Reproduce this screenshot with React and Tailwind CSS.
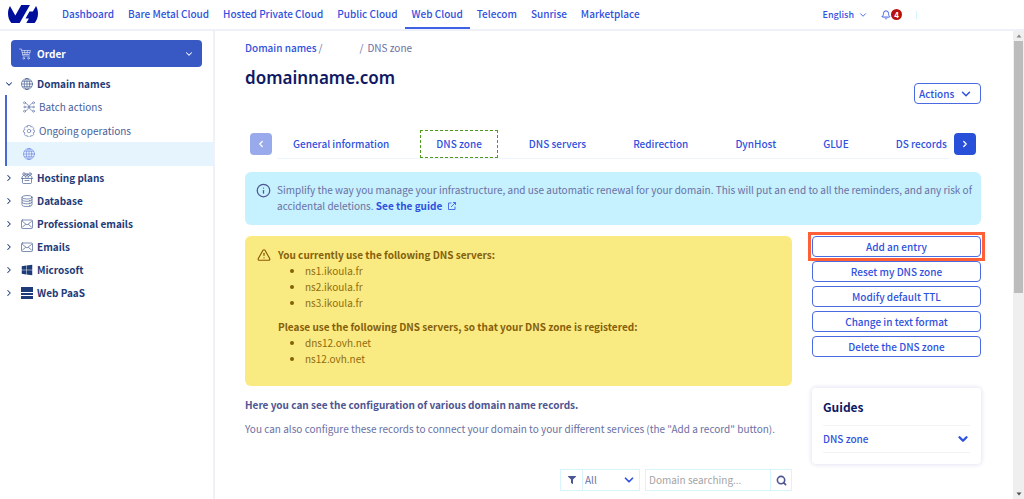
import { useState } from 'react'
import { SiOvh } from 'react-icons/si'
import { FaWindows, FaFilter } from 'react-icons/fa'
import { ChevronDown, ChevronLeft, ChevronRight, Bell, Search, Info, TriangleAlert } from 'lucide-react'

const universes = [
  'Dashboard',
  'Bare Metal Cloud',
  'Hosted Private Cloud',
  'Public Cloud',
  'Web Cloud',
  'Telecom',
  'Sunrise',
  'Marketplace',
]

const tabs = [
  'General information',
  'DNS zone',
  'DNS servers',
  'Redirection',
  'DynHost',
  'GLUE',
  'DS records',
]

const zoneActions = [
  'Add an entry',
  'Reset my DNS zone',
  'Modify default TTL',
  'Change in text format',
  'Delete the DNS zone',
]

function LineIcon({ children }) {
  return (
    <svg
      className="h-3 w-3 shrink-0 opacity-80"
      viewBox="0 0 24 24"
      fill="none"
      stroke="currentColor"
      strokeWidth="1.4"
      strokeLinecap="round"
      strokeLinejoin="round"
      aria-hidden="true"
    >
      {children}
    </svg>
  )
}

function GlobeIcon() {
  return (
    <LineIcon>
      <circle cx="12" cy="12" r="11" />
      <ellipse cx="12" cy="12" rx="5.5" ry="11" />
      <path d="M12 1v22M1 12h22M3 6.5h18M3 17.5h18" />
    </LineIcon>
  )
}

function BatchIcon() {
  return (
    <LineIcon>
      <path d="M5 4.5l4 2 3 5.5 3-5.5 4-2M5 19.5l4-2 3-5.5 3 5.5 4 2M5 12h3M16 12h3" />
      <circle cx="3" cy="3.5" r="2" />
      <circle cx="21" cy="3.5" r="2" />
      <circle cx="3" cy="20.5" r="2" />
      <circle cx="21" cy="20.5" r="2" />
      <circle cx="3" cy="12" r="1.5" />
      <circle cx="21" cy="12" r="1.5" />
      <circle cx="12" cy="12" r="2" />
    </LineIcon>
  )
}

function GearIcon() {
  return (
    <LineIcon>
      <path d="M9.5 1h5l1 3 3-1 3 3.5-1.5 3 3 1.2v3.6l-3 1.2 1.5 3-3 3.5-3-1-1 3h-5l-1-3-3 1-3-3.5 1.5-3-3-1.2v-3.6l3-1.2-1.5-3L5.5 3l3 1z" />
      <circle cx="12" cy="12" r="3.5" />
    </LineIcon>
  )
}

function HostingIcon() {
  return (
    <LineIcon>
      <path d="M1 13h22M3 13v8q0 2 2 2h14q2 0 2-2v-8M8 17h8" />
      <path d="M2 12c0-4 2-5 4-5s3 2 4 5M14 12c0-3 2-5 4-5s4 1 4 5M8 9c1-2 7-2 8 0" />
      <circle cx="6" cy="4" r="2.5" />
      <circle cx="18" cy="4" r="2.5" />
      <circle cx="12" cy="5" r="2" />
    </LineIcon>
  )
}

function DatabaseIcon() {
  return (
    <LineIcon>
      <ellipse cx="12" cy="4.5" rx="10" ry="3.5" />
      <path d="M2 4.5v15c0 5 20 5 20 0v-15M2 9.5c0 4.5 20 4.5 20 0M2 14.5c0 4.5 20 4.5 20 0M17 11h1M17 16h1M17 21h1" />
    </LineIcon>
  )
}

function MailIcon() {
  return (
    <LineIcon>
      <rect x="1" y="4" width="22" height="17" rx="2" />
      <path d="M3 7l9 7 9-7M3 18l6-5M21 18l-6-5" />
    </LineIcon>
  )
}

function PaasIcon() {
  return (
    <svg className="h-3 w-3 shrink-0" viewBox="0 0 12 12" fill="currentColor" aria-hidden="true">
      <path d="M0 0h12v5H0zM0 6h12v2H0zM0 9h12v3H0z" />
    </svg>
  )
}

function CartIcon() {
  return (
    <LineIcon>
      <path d="M1 2h4l3 14h13M5.5 5H23l-2.5 8H7.5M6.5 9h15M11 5l1 8M17 5l-1 8" />
      <circle cx="9.5" cy="20.5" r="1.8" />
      <circle cx="19" cy="20.5" r="1.8" />
    </LineIcon>
  )
}

function ExternalIcon() {
  return (
    <svg
      className="ml-[6px] inline h-2 w-2 align-baseline"
      viewBox="0 0 16 16"
      fill="none"
      stroke="currentColor"
      strokeWidth="1.6"
      aria-hidden="true"
    >
      <path d="M7 2H1v13h13V9M10 1h5v5M15 1L6 10" />
    </svg>
  )
}

const services = [
  { label: 'Hosting plans', icon: <HostingIcon /> },
  { label: 'Database', icon: <DatabaseIcon /> },
  { label: 'Professional emails', icon: <MailIcon /> },
  { label: 'Emails', icon: <MailIcon /> },
  { label: 'Microsoft', icon: <FaWindows className="h-3 w-3 shrink-0" /> },
  { label: 'Web PaaS', icon: <PaasIcon /> },
]

function Header() {
  return (
    <header className="flex h-[31px] shrink-0 items-stretch border-b-2 border-[#f0f1f8] text-[#2f51dd]">
      <a href="#home" aria-label="OVH" className="flex items-center pb-[2px] pl-2 text-[#000e9c]">
        <SiOvh className="h-[30px] w-[30px]" />
      </a>
      <nav className="ml-[17px] flex">
        {universes.map((name) => (
          <a
            key={name}
            href="#universe"
            className={`flex items-center border-b-2 px-[7px] font-medium whitespace-nowrap ${
              name === 'Web Cloud' ? 'border-[#3f62e4]' : 'border-transparent'
            }`}
          >
            {name}
          </a>
        ))}
      </nav>
      <div className="mr-[107px] ml-auto flex items-center">
        <button className="flex items-center gap-1 text-[9px] font-medium">
          English
          <ChevronDown className="h-[10px] w-[10px]" strokeWidth={2} />
        </button>
        <button className="ml-[13px] flex items-center" aria-label="Notifications">
          <Bell className="h-[10px] w-[10px]" strokeWidth={2.2} />
          <span className="flex h-[11px] w-[11px] items-center justify-center rounded-full bg-[#b81010] text-[8px] leading-none font-bold text-white">
            4
          </span>
        </button>
        <span className="ml-[14px] h-2 border-l border-[#d5f5fb]" />
      </div>
    </header>
  )
}

function Sidebar() {
  return (
    <aside className="w-[215px] shrink-0 border-r-2 border-[#f0f1f8] text-[#1c3b78]">
      <div className="px-[11px] pt-[9px] pb-[5px]">
        <button className="flex h-[27px] w-full items-center rounded bg-[#3859c4] px-2 font-bold text-white">
          <CartIcon />
          <span className="ml-[6px]">Order</span>
          <ChevronDown className="ml-auto h-[10px] w-[10px]" strokeWidth={2.5} />
        </button>
      </div>
      <ul>
        <li>
          <a href="#domains" className="flex h-[23px] items-center pl-1 font-bold">
            <ChevronDown className="mr-[7px] h-[10px] w-[10px]" strokeWidth={2.5} />
            <GlobeIcon />
            <span className="ml-1">Domain names</span>
          </a>
          <ul className="ml-[5px] border-l-2 border-[#4a68d4] text-[#47609a]">
            <li>
              <a href="#batch" className="flex h-6 items-center gap-1 pl-4">
                <BatchIcon />
                Batch actions
              </a>
            </li>
            <li>
              <a href="#operations" className="flex h-[23px] items-center gap-1 pl-4">
                <GearIcon />
                Ongoing operations
              </a>
            </li>
            <li>
              <a href="#domain" aria-label="Domain" className="flex h-6 items-center bg-[#e6f4fd] pl-4 text-[#5b77df]">
                <GlobeIcon />
              </a>
            </li>
          </ul>
        </li>
        {services.map(({ label, icon }) => (
          <li key={label}>
            <a href="#service" className="flex h-[23px] items-center pl-1 font-bold">
              <ChevronRight className="mr-[7px] h-[10px] w-[10px]" strokeWidth={2.5} />
              {icon}
              <span className="ml-1">{label}</span>
            </a>
          </li>
        ))}
      </ul>
    </aside>
  )
}

function Tabs({ current, onSelect }) {
  return (
    <div className="mt-[26px] flex items-start gap-[5px] px-[5px] text-[#2f51dd]">
      <button
        aria-label="Previous tabs"
        disabled
        className="mt-[3px] flex h-[22px] w-[22px] shrink-0 items-center justify-center rounded bg-[#98a9ec] text-white"
      >
        <ChevronLeft className="h-[10px] w-[10px]" strokeWidth={3} />
      </button>
      <div className="flex min-w-0 flex-1 gap-[15px] overflow-hidden border-b border-[#eef6fd]" role="tablist">
        {tabs.map((tab) => (
          <button
            key={tab}
            role="tab"
            aria-selected={tab === current}
            onClick={() => onSelect(tab)}
            className={`h-7 shrink-0 border px-[15px] font-medium whitespace-nowrap ${
              tab === current ? 'border-dashed border-[#4f9a1c]' : 'border-transparent'
            }`}
          >
            {tab}
          </button>
        ))}
      </div>
      <button
        aria-label="Next tabs"
        className="mt-[3px] flex h-[22px] w-[22px] shrink-0 items-center justify-center rounded bg-[#2850d9] text-white"
      >
        <ChevronRight className="h-[10px] w-[10px]" strokeWidth={3} />
      </button>
    </div>
  )
}

function ServersNotice() {
  return (
    <div className="flex min-h-[150px] rounded-md bg-[#faea82] px-3 pt-[11px] text-[#8f6c0c]">
      <TriangleAlert className="mt-px mr-[7px] h-[14px] w-[14px] shrink-0 text-[#8a5a00]" strokeWidth={2} />
      <div>
        <p className="font-bold text-[#85600a]">You currently use the following DNS servers:</p>
        <ul className="list-disc pl-[27px] marker:text-[#85600a]">
          <li>ns1.ikoula.fr</li>
          <li>ns2.ikoula.fr</li>
          <li>ns3.ikoula.fr</li>
        </ul>
        <p className="mt-2 font-bold text-[#85600a]">
          Please use the following DNS servers, so that your DNS zone is registered:
        </p>
        <ul className="list-disc pl-[27px] marker:text-[#85600a]">
          <li>dns12.ovh.net</li>
          <li>ns12.ovh.net</li>
        </ul>
      </div>
    </div>
  )
}

function Filters() {
  return (
    <div className="mt-8 flex justify-end gap-[5px]">
      <div className="flex h-[22px] w-20 border border-[#d8f5fd]">
        <label htmlFor="record-type" aria-label="Record type" className="flex w-[21px] items-center justify-center text-[#4d5592]">
          <FaFilter className="h-2 w-2" />
        </label>
        <div className="relative flex-1 border-l border-[#d8f5fd]">
          <select id="record-type" className="h-full w-full appearance-none pl-[2px] outline-none">
            <option>All</option>
          </select>
          <ChevronDown className="pointer-events-none absolute top-[3px] right-[3px] h-[14px] w-[14px] text-[#2f51dd]" strokeWidth={3} />
        </div>
      </div>
      <div className="flex h-[22px] w-[147px] border border-[#d8f5fd]">
        <input
          type="text"
          aria-label="Domain searching"
          placeholder="Domain searching..."
          className="min-w-0 flex-1 pl-[3px] outline-none placeholder:text-[#a3a3a3]"
        />
        <button aria-label="Search" className="flex w-[21px] items-center justify-center border-l border-[#d8f5fd] text-[#4d5592]">
          <Search className="h-[11px] w-[11px]" strokeWidth={3.5} />
        </button>
      </div>
    </div>
  )
}

function ZonePanel() {
  return (
    <div className="w-[169px] shrink-0">
      <ul className="flex flex-col gap-1">
        {zoneActions.map((action, idx) => (
          <li key={action} className={idx === 0 ? 'outline-3 outline-offset-1 outline-[#ff6038]' : ''}>
            <button className="flex h-[21px] w-full items-center justify-center rounded border border-[#4a6ae2] font-medium text-[#2f51dd]">
              {action}
            </button>
          </li>
        ))}
      </ul>
      <div className="mt-[31px] rounded px-[11px] pt-[9px] pb-[11px] shadow-[0_0_4px_1px_#e4e4f2]">
        <h2 className="text-xs leading-5 font-bold text-[#0f1863]">Guides</h2>
        <button className="mt-2 flex h-7 w-full items-center justify-between border-y border-[#f2f2f5] font-medium text-[#2f51dd]">
          DNS zone
          <ChevronDown className="h-[14px] w-[14px]" strokeWidth={4} />
        </button>
      </div>
    </div>
  )
}

// Static scroll track on the right edge of the content
function ScrollTrack() {
  return (
    <div className="flex w-[11px] shrink-0 flex-col items-center bg-[#efefef]" aria-hidden="true">
      <svg className="h-[10px] w-[10px] shrink-0" viewBox="0 0 10 10">
        <path d="M2.5 6.5L5 3.5l2.5 3z" fill="#8a8a8a" />
      </svg>
      <div className="h-[252px] w-[9px] bg-[#bcbcbc]" />
      <svg className="mt-auto h-[10px] w-[10px] shrink-0" viewBox="0 0 10 10">
        <path d="M2.5 3.5L5 6.5l2.5-3z" fill="#505050" />
      </svg>
    </div>
  )
}

export default function App() {
  const [tab, setTab] = useState('DNS zone')

  return (
    <div className="flex h-screen flex-col overflow-hidden bg-white font-['Noto_Sans_CJK_SC',sans-serif] text-[10px] leading-4 text-[#6a70a4]">
      <Header />
      <div className="flex min-h-0 flex-1">
        <Sidebar />
        <main className="min-w-0 flex-1 overflow-hidden pt-[9px] pr-8 pl-[30px]">
          <nav className="flex">
            <a href="#domains" className="font-medium text-[#2f51dd]">
              Domain names
            </a>
            <span className="ml-[2px]">/</span>
            <span className="ml-[37px]">/</span>
            <span className="ml-1">DNS zone</span>
          </nav>
          <h1 className="mt-2 font-['Noto_Sans',sans-serif] text-[17px] leading-7 font-semibold text-[#0f1863]">
            domainname.com
          </h1>
          <div className="-mt-[9px] flex justify-end">
            <button className="flex h-[21px] w-[67px] items-center justify-between rounded border border-[#4a6ae2] pr-[7px] pl-1 font-medium text-[#2f51dd]">
              Actions
              <ChevronDown className="h-[14px] w-[14px]" strokeWidth={2.5} />
            </button>
          </div>
          <Tabs current={tab} onSelect={setTab} />
          <div className="mt-[13px] flex min-h-[53px] rounded-md bg-[#c6f1ff] pt-[10px] pr-2 pl-[11px]">
            <Info className="mt-px mr-[6px] h-[15px] w-[15px] shrink-0 text-[#4d5592]" strokeWidth={2} />
            <p>
              Simplify the way you manage your infrastructure, and use automatic renewal for your domain. This will put
              an end to all the reminders, and any risk of accidental deletions.{' '}
              <a href="#guide" className="font-bold text-[#2f51dd]">
                See the guide
                <ExternalIcon />
              </a>
            </p>
          </div>
          <div className="mt-[11px] flex gap-5">
            <div className="min-w-0 flex-1">
              <ServersNotice />
              <p className="mt-[11px] font-bold text-[#4d5592]">
                Here you can see the configuration of various domain name records.
              </p>
              <p className="mt-2">
                You can also configure these records to connect your domain to your different services (the "Add a
                record" button).
              </p>
              <Filters />
            </div>
            <ZonePanel />
          </div>
        </main>
        <ScrollTrack />
      </div>
    </div>
  )
}
